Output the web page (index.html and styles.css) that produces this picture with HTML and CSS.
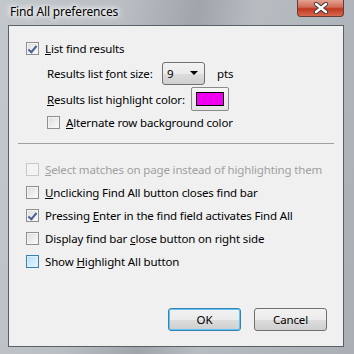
FILE: index.html
```html
<!DOCTYPE html>
<html lang="en">
<head>
    <meta charset="UTF-8">
    <title>Find All preferences</title>
    <link rel="stylesheet" href="styles.css">
</head>
<body>

<div class="window">
    <!-- Title bar -->
    <div class="titlebar">
        <span class="title">Find All preferences</span>
        <div class="close">
            <svg width="16" height="12" viewBox="0 0 16 12">
                <path d="M3 2 L13 10 M13 2 L3 10" stroke="#3a3a3a" stroke-width="4.2" stroke-linecap="round"/>
                <path d="M3 2 L13 10 M13 2 L3 10" stroke="#ffffff" stroke-width="2.4" stroke-linecap="round"/>
            </svg>
        </div>
    </div>

    <div class="client">
        <!-- Results list options -->
        <div class="row first">
            <span class="check checked"></span>
            <span class="label"><u>L</u>ist find results</span>
        </div>
        <div class="sub">
            <div class="row field">
                <span class="label">Results list <u>f</u>ont size:</span>
                <div class="combo"><span>9</span><span class="arrow"></span></div>
                <span class="label unit">pts</span>
            </div>
            <div class="row field">
                <span class="label"><u>R</u>esults list highlight color:</span>
                <div class="color-btn"><span class="swatch"></span></div>
            </div>
            <div class="row">
                <span class="check"></span>
                <span class="label"><u>A</u>lternate row background color</span>
            </div>
        </div>

        <div class="sep"></div>

        <!-- Find bar options -->
        <div class="row opt">
            <span class="check disabled"></span>
            <span class="label disabled"><u>S</u>elect matches on page instead of highlighting them</span>
        </div>
        <div class="row opt">
            <span class="check"></span>
            <span class="label"><u>U</u>nclicking Find All button closes find bar</span>
        </div>
        <div class="row opt">
            <span class="check checked"></span>
            <span class="label">Pressing <u>E</u>nter in the find field activates Find All</span>
        </div>
        <div class="row opt">
            <span class="check"></span>
            <span class="label">Display find bar <u>c</u>lose button on right side</span>
        </div>
        <div class="row opt">
            <span class="check hover"></span>
            <span class="label">Show <u>H</u>ighlight All button</span>
        </div>

        <div class="buttons">
            <div class="btn default">OK</div>
            <div class="btn">Cancel</div>
        </div>
    </div>
</div>

</body>
</html>
```

FILE: styles.css
```css
body {
    margin: 0;
    font-family: "Noto Sans", "Open Sans", sans-serif;
    font-size: 11.5px;
    letter-spacing: -0.15px;
    color: #000;
}
.window {
    width: 354px;
    height: 354px;
    box-sizing: border-box;
    padding: 0 10px 7px 8px;
    display: flex;
    flex-direction: column;
    background: linear-gradient(100deg, #c3c8cd 0%, #b9bec3 30%, #9fa5ab 48%, #b7bcc1 62%, #a9afb5 100%);
}
.titlebar {
    height: 25px;
    display: flex;
    justify-content: space-between;
    align-items: flex-start;
}
.title {
    margin: 5px 0 0 2px;
    font-size: 12px;
    line-height: 14px;
    text-shadow: 0 0 8px #fff, 0 0 6px #fff, 0 0 4px #fff;
}
.close {
    width: 47px;
    height: 17px;
    box-sizing: border-box;
    border: 1px solid #6b3a32;
    border-top: none;
    border-radius: 0 0 4px 4px;
    background: linear-gradient(#e4a293 0%, #cf6b55 45%, #c0371f 55%, #d8684e 100%);
    display: flex;
    justify-content: center;
    align-items: center;
}
.client {
    flex: 1;
    background: #f0f0f0;
    border: 1px solid #5b6066;
    padding: 11px 0 0 0;
    display: flex;
    flex-direction: column;
}
.row {
    display: flex;
    align-items: center;
    height: 22px;
    padding-left: 17px;
}
.label {
    white-space: nowrap;
    margin-left: 6px;
}
.sub {
    padding-left: 21px;
}
.field {
    height: 24px;
}
.field .label {
    margin-left: 0;
    width: 115px;
}
.field:first-child {
    margin-top: 2px;
}
.field + .field {
    margin-top: 2px;
}
.field + .field .label {
    width: 144px;
}
.field .label.unit {
    width: auto;
    margin-left: 12px;
}
.check {
    width: 13px;
    height: 13px;
    box-sizing: border-box;
    border: 1px solid #8e8f8f;
    background: linear-gradient(135deg, #dcdcdc, #fbfbfb);
    box-shadow: inset 0 0 0 1px #f4f4f4;
    position: relative;
    flex: none;
}
.check.checked::after {
    content: "";
    position: absolute;
    left: 3px;
    top: 1px;
    width: 3px;
    height: 7px;
    border: solid #4a5f97;
    border-width: 0 2px 2px 0;
    transform: rotate(40deg);
}
.check.disabled {
    border-color: #c9c9c9;
    background: #f4f4f4;
    box-shadow: none;
}
.label.disabled {
    color: #a0a0a0;
}
.check.hover {
    border-color: #3c7fb1;
    background: linear-gradient(135deg, #b1dff8, #e9f7fe);
    box-shadow: inset 0 0 0 1px #def0fa;
}
.combo {
    width: 43px;
    height: 23px;
    box-sizing: border-box;
    border: 1px solid #707070;
    border-radius: 3px;
    background: linear-gradient(#f2f2f2 0%, #ebebeb 50%, #dddddd 51%, #cfcfcf 100%);
    display: flex;
    align-items: center;
    justify-content: space-between;
    padding: 0 6px 0 4px;
}
.arrow {
    width: 0;
    height: 0;
    border-left: 4px solid transparent;
    border-right: 4px solid transparent;
    border-top: 4px solid #000;
}
.color-btn {
    width: 38px;
    height: 24px;
    box-sizing: border-box;
    border: 1px solid #8a8a8a;
    border-radius: 2px;
    background: linear-gradient(#f6f6f6, #e4e4e4);
    display: flex;
    align-items: center;
    justify-content: center;
}
.swatch {
    width: 28px;
    height: 14px;
    box-sizing: border-box;
    border: 1px solid #000;
    background: #f000f0;
}
.sep {
    height: 1px;
    background: #a0a0a0;
    margin: 10px 9px 14px 9px;
}
.opt {
    height: 23px;
}
.buttons {
    display: flex;
    justify-content: flex-end;
    gap: 13px;
    margin-top: 35px;
    padding-right: 16px;
}
.btn {
    width: 73px;
    height: 23px;
    box-sizing: border-box;
    border: 1px solid #707070;
    border-radius: 3px;
    background: linear-gradient(#f2f2f2 0%, #ebebeb 50%, #dddddd 51%, #cfcfcf 100%);
    display: flex;
    align-items: center;
    justify-content: center;
}
.btn.default {
    border-color: #3c7fb1;
    box-shadow: inset 0 0 0 1px #5ec6f4;
}
```
